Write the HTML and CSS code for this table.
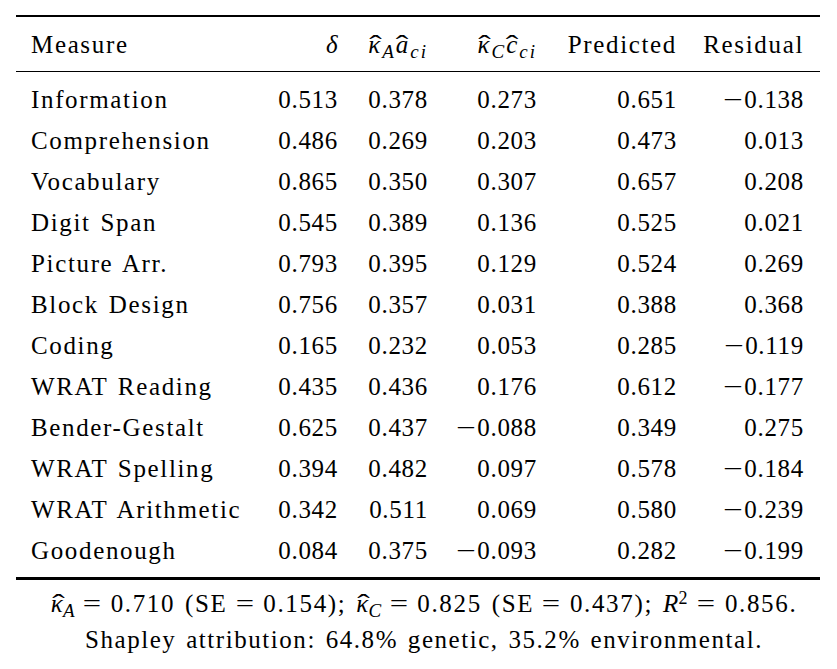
FILE: index.html
```html
<!DOCTYPE html>
<html>
<head>
<meta charset="utf-8">
<link rel="stylesheet" href="styles.css">
</head>
<body>
<div class="page">
  <table class="tbl">
    <thead>
      <tr>
        <th class="c1 lbl">Measure</th>
        <th class="c2"><span class="mi">δ</span></th>
        <th class="c3"><span class="mi mh"><span class="acc acc-k">κ</span><sub>A</sub><span class="acc">a</span><sub>ci</sub></span></th>
        <th class="c4"><span class="mi mh"><span class="acc acc-k">κ</span><sub>C</sub><span class="acc">c</span><sub>ci</sub></span></th>
        <th class="c5 lbl">Predicted</th>
        <th class="c6 lbl">Residual</th>
      </tr>
    </thead>
    <tbody>
      <tr><td class="c1 lbl">Information</td><td class="c2 num">0.513</td><td class="c3 num">0.378</td><td class="c4 num">0.273</td><td class="c5 num">0.651</td><td class="c6 num"><span class="minus">−</span>0.138</td></tr>
      <tr><td class="c1 lbl">Comprehension</td><td class="c2 num">0.486</td><td class="c3 num">0.269</td><td class="c4 num">0.203</td><td class="c5 num">0.473</td><td class="c6 num">0.013</td></tr>
      <tr><td class="c1 lbl">Vocabulary</td><td class="c2 num">0.865</td><td class="c3 num">0.350</td><td class="c4 num">0.307</td><td class="c5 num">0.657</td><td class="c6 num">0.208</td></tr>
      <tr><td class="c1 lbl">Digit Span</td><td class="c2 num">0.545</td><td class="c3 num">0.389</td><td class="c4 num">0.136</td><td class="c5 num">0.525</td><td class="c6 num">0.021</td></tr>
      <tr><td class="c1 lbl">Picture Arr.</td><td class="c2 num">0.793</td><td class="c3 num">0.395</td><td class="c4 num">0.129</td><td class="c5 num">0.524</td><td class="c6 num">0.269</td></tr>
      <tr><td class="c1 lbl">Block Design</td><td class="c2 num">0.756</td><td class="c3 num">0.357</td><td class="c4 num">0.031</td><td class="c5 num">0.388</td><td class="c6 num">0.368</td></tr>
      <tr><td class="c1 lbl">Coding</td><td class="c2 num">0.165</td><td class="c3 num">0.232</td><td class="c4 num">0.053</td><td class="c5 num">0.285</td><td class="c6 num"><span class="minus">−</span>0.119</td></tr>
      <tr><td class="c1 lbl">WRAT Reading</td><td class="c2 num">0.435</td><td class="c3 num">0.436</td><td class="c4 num">0.176</td><td class="c5 num">0.612</td><td class="c6 num"><span class="minus">−</span>0.177</td></tr>
      <tr><td class="c1 lbl">Bender-Gestalt</td><td class="c2 num">0.625</td><td class="c3 num">0.437</td><td class="c4 num"><span class="minus">−</span>0.088</td><td class="c5 num">0.349</td><td class="c6 num">0.275</td></tr>
      <tr><td class="c1 lbl">WRAT Spelling</td><td class="c2 num">0.394</td><td class="c3 num">0.482</td><td class="c4 num">0.097</td><td class="c5 num">0.578</td><td class="c6 num"><span class="minus">−</span>0.184</td></tr>
      <tr><td class="c1 lbl">WRAT Arithmetic</td><td class="c2 num">0.342</td><td class="c3 num">0.511</td><td class="c4 num">0.069</td><td class="c5 num">0.580</td><td class="c6 num"><span class="minus">−</span>0.239</td></tr>
      <tr><td class="c1 lbl">Goodenough</td><td class="c2 num">0.084</td><td class="c3 num">0.375</td><td class="c4 num"><span class="minus">−</span>0.093</td><td class="c5 num">0.282</td><td class="c6 num"><span class="minus">−</span>0.199</td></tr>
    </tbody>
  </table>
  <div class="foot">
    <p class="fline fnum"><span class="mi"><span class="acc acc-k">κ</span><sub>A</sub></span><span class="rel">=</span>0.710 (SE<span class="rel">=</span>0.154); <span class="mi"><span class="acc acc-k">κ</span><sub>C</sub></span><span class="rel">=</span>0.825 (SE<span class="rel">=</span>0.437); <span class="mi">R</span><sup>2</sup><span class="rel">=</span>0.856.</p>
    <p class="fline lbl2">Shapley attribution: 64.8% genetic, 35.2% environmental.</p>
  </div>
</div>
</body>
</html>
```

FILE: styles.css
```css
* { box-sizing: border-box; }

body {
  margin: 0;
  background: #ffffff;
  color: #000000;
  font-family: "Liberation Serif", "Times New Roman", serif;
  font-size: 25px;
}

.page {
  margin: 15px 0 0 16px;
  width: 804px;
}

.tbl {
  width: 804px;
  table-layout: fixed;
  border-collapse: separate;
  border-spacing: 0;
  border-top: 2px solid #000;
  border-bottom: 3px solid #000;
}

.tbl th,
.tbl td {
  padding: 0;
  line-height: 41px;
  white-space: nowrap;
  font-weight: normal;
  text-align: right;
}

.tbl th {
  padding-top: 7px;
  padding-bottom: 6px;
  border-bottom: 1px solid #000;
}

.tbl tbody tr:first-child td { padding-top: 7px; }
.tbl tbody tr:last-child td { padding-bottom: 6px; }

.c1 { width: 250px; text-align: left !important; padding-left: 15px !important; }
.c2 { width: 72px; }
.c3 { width: 90px; }
.c4 { width: 109px; }
.c5 { width: 140px; }
.c6 { width: 143px; padding-right: 16px !important; }

.lbl {
  letter-spacing: 1.65px;
  word-spacing: 2px;
}

.num {
  letter-spacing: 0.7px;
}

.minus {
  display: inline-block;
  transform: scaleX(1.4);
  margin-left: 2px;
  margin-right: 3px;
}

.mi {
  font-style: italic;
  letter-spacing: 0.3px;
}

.mh {
  letter-spacing: 2px;
}

.acc {
  position: relative;
  display: inline-block;
  line-height: 1;
}

.acc::after {
  content: "ˆ";
  position: absolute;
  left: 50%;
  top: 0;
  font-style: normal;
  line-height: 1;
  transform: translateX(-45%) scaleX(1.5);
}

.acc-k::after {
  transform: translateX(-30%) scaleX(1.5);
}

sub {
  font-size: 0.76em;
  vertical-align: -0.25em;
  line-height: 0;
  font-style: italic;
}

sup {
  font-size: 0.72em;
  vertical-align: 0.42em;
  line-height: 0;
}

.foot {
  padding-top: 6px;
  padding-left: 12px;
  text-align: center;
}

.fline {
  margin: 0;
  line-height: 36px;
  white-space: nowrap;
}

.fnum {
  letter-spacing: 1.65px;
  word-spacing: 2px;
}

.rel {
  display: inline-block;
  transform: scaleX(1.3);
  margin: 0 10px;
}

.lbl2 {
  letter-spacing: 1.55px;
  word-spacing: 2px;
}
```
